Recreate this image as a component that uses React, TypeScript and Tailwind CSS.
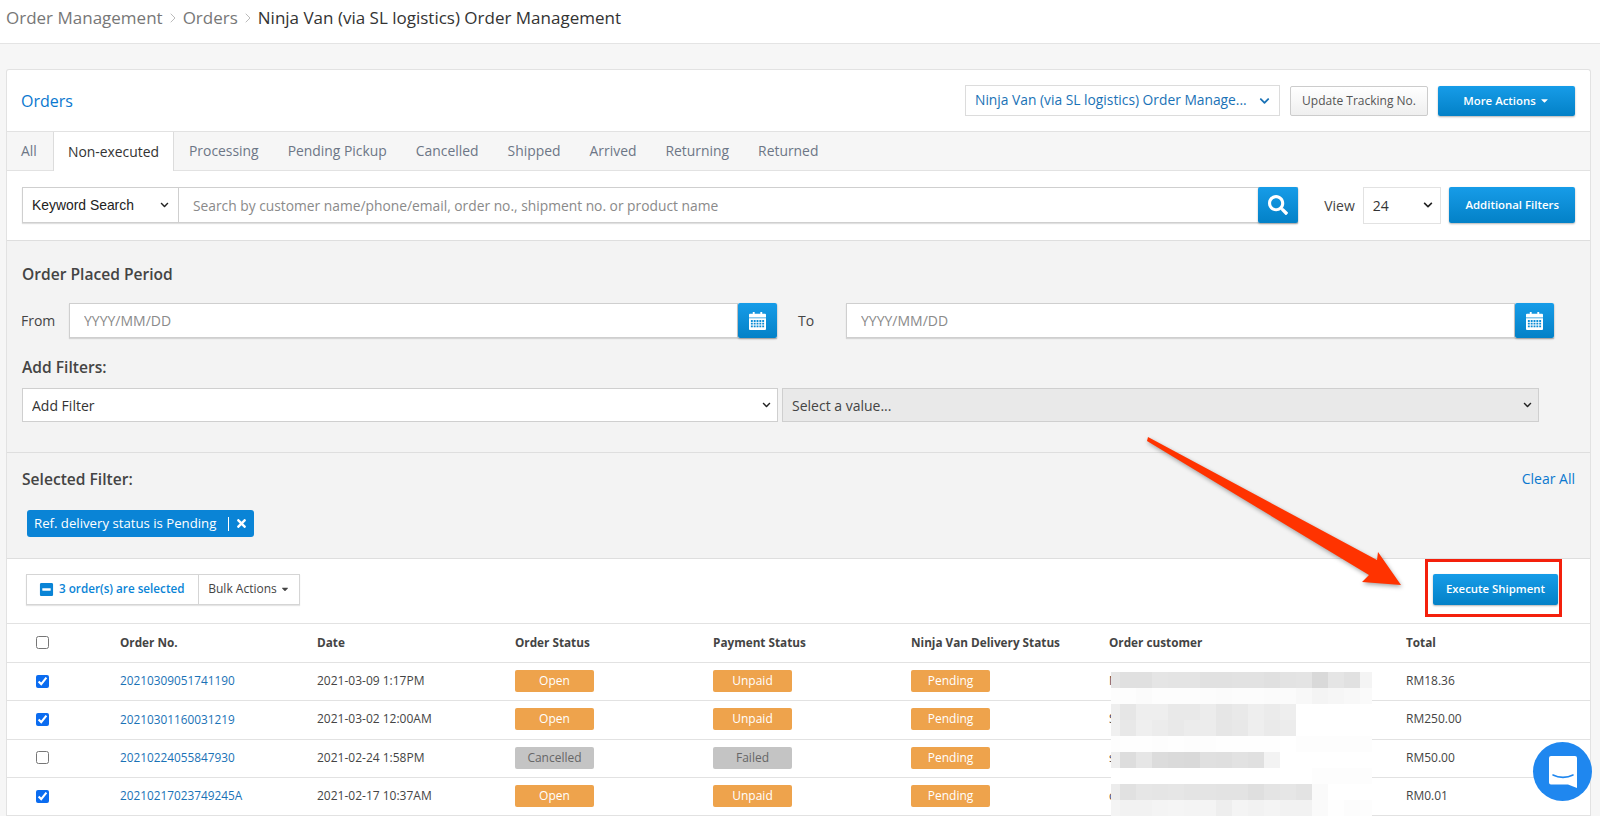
import { ChevronRight } from 'lucide-react';
import { FaCaretDown, FaChevronDown, FaMinusSquare, FaSearch, FaTimes } from 'react-icons/fa';

const blueButton =
  'flex items-center justify-center rounded-[2px] bg-linear-to-b from-[#169ce8] to-[#0381c7] text-white shadow-[0_1px_2px_rgba(0,0,0,0.3)]';

const tabs = ['Processing', 'Pending Pickup', 'Cancelled', 'Shipped', 'Arrived', 'Returning', 'Returned'];

const orders = [
  { no: '20210309051741190', date: '2021-03-09 1:17PM', status: 'Open', payment: 'Unpaid', initial: 'N', total: 'RM18.36', checked: true },
  { no: '20210301160031219', date: '2021-03-02 12:00AM', status: 'Open', payment: 'Unpaid', initial: 'S', total: 'RM250.00', checked: true },
  { no: '20210224055847930', date: '2021-02-24 1:58PM', status: 'Cancelled', payment: 'Failed', initial: 's', total: 'RM50.00', checked: false },
  { no: '20210217023749245A', date: '2021-02-17 10:37AM', status: 'Open', payment: 'Unpaid', initial: 'c', total: 'RM0.01', checked: true },
];

// mosaic over the customer names, one row per 16px band
const mosaic = [
  ['e5', 'e0', 'e0', 'e5', 'e4', 'e4', 'e1', 'e1', 'e2', 'e2', 'e0', 'e3', 'e4', 'd9', 'e5', 'e1', 'f4'],
  ['fd', 'fd', 'fb', 'fd', 'fd', 'fd', 'fc', 'fb', 'fc', 'fc', 'fb', 'fb', 'f8', 'f4', 'f6', 'f8', 'fa'],
  ['ee', 'e6', 'ee', 'ee', 'e9', 'e9', 'ec', 'e6', 'e9', 'ee', 'eb', 'ee', 'ff', 'ff', 'ff', 'ff', 'ff'],
  ['f0', 'e8', 'ef', 'ec', 'e9', 'ec', 'ec', 'e6', 'e8', 'ee', 'ea', 'ec', 'ff', 'ff', 'ff', 'ff', 'ff'],
  ['fd', 'fe', 'fe', 'fd', 'fe', 'fd', 'fd', 'fe', 'fe', 'fe', 'fe', 'ff', 'fd', 'fd', 'fd', 'fd', 'fd'],
  ['ee', 'dd', 'e6', 'dc', 'da', 'd9', 'e0', 'df', 'e2', 'e0', 'f3', 'ff', 'ff', 'ff', 'ff', 'ff', 'ff'],
  ['ff', 'ff', 'ff', 'ff', 'ff', 'ff', 'ff', 'ff', 'ff', 'ff', 'ff', 'ff', 'ff', 'fd', 'fd', 'fd', 'fd'],
  ['ec', 'e1', 'e6', 'e5', 'e6', 'e4', 'e4', 'e3', 'e3', 'df', 'e4', 'e6', 'e3', 'fa', 'ff', 'ff', 'ff'],
  ['f4', 'f2', 'f2', 'f4', 'f5', 'f4', 'f4', 'ee', 'f4', 'f2', 'f4', 'f2', 'f2', 'fa', 'fe', 'fc', 'fd'],
];

const NativeSelect = ({ label, className, chevron }: { label: string; className: string; chevron?: string }) => (
  <div className={`relative ${className}`}>
    <select className="h-full w-full appearance-none bg-transparent pl-[9px] outline-none">
      <option>{label}</option>
    </select>
    <FaChevronDown className={`pointer-events-none absolute top-1/2 -translate-y-1/2 ${chevron ?? 'right-[6px] text-[9px] text-[#222]'}`} />
  </div>
);

const CalendarIcon = () => (
  <svg width="17" height="18" viewBox="0 0 18 20" fill="white" preserveAspectRatio="none">
    <path fillRule="evenodd" d="M4 0h2v2h6V0h2v2h3a1 1 0 0 1 1 1v3H0V3a1 1 0 0 1 1-1h3V0z" />
    <path
      fillRule="evenodd"
      d="M0 7h18v12a1 1 0 0 1-1 1H1a1 1 0 0 1-1-1V7zm2 2v2h2V9H2zm3 0v2h2V9H5zm3 0v2h2V9H8zm3 0v2h2V9h-2zm3 0v2h2V9h-2zM2 12v2h2v-2H2zm3 0v2h2v-2H5zm3 0v2h2v-2H8zm3 0v2h2v-2h-2zm3 0v2h2v-2h-2zM2 15v2h2v-2H2zm3 0v2h2v-2H5zm3 0v2h2v-2H8zm3 0v2h2v-2h-2zm3 0v2h2v-2h-2z"
    />
  </svg>
);

const DateField = ({ label, className }: { label: string; className: string }) => (
  <div className={`flex items-center ${className}`}>
    <span className="-ml-px text-[14px] text-[#444]">{label}</span>
    <div className="ml-auto flex h-[35px] w-[calc(100%-47px)] shadow-[0_1px_1px_rgba(0,0,0,0.12)]">
      <input
        placeholder="YYYY/MM/DD"
        className="h-full min-w-0 flex-1 border border-[#cfcfcf] bg-white px-[14px] text-[14px] placeholder:text-[#8a8a8a]"
      />
      <button className={`${blueButton} h-full w-[39px]`}>
        <CalendarIcon />
      </button>
    </div>
  </div>
);

const Badge = ({ text }: { text: string }) => {
  const gray = text === 'Cancelled' || text === 'Failed';
  return (
    <span
      className={`flex h-[22px] w-[79px] items-center justify-center rounded-[2px] text-[12px] ${
        gray ? 'bg-[#c4c4c4] text-[#666]' : 'bg-[#eea34c] text-white'
      }`}
    >
      {text}
    </span>
  );
};

const gridCols = 'grid grid-cols-[113px_197px_198px_198px_198px_198px_297px_1fr] items-center';

export default function App() {
  return (
    <div className="relative h-[816px] w-[1600px] overflow-hidden bg-[#f6f6f6] font-['Open_Sans',sans-serif] text-[#333]">
      <header className="flex h-[44px] items-center border-b border-[#e4e4e4] bg-white pb-[7px] pl-[6px] text-[17px] text-[#777]">
        Order Management
        <ChevronRight className="mx-[2px] h-[16px] w-[16px] text-[#999]" strokeWidth={1} />
        Orders
        <ChevronRight className="mx-[2px] h-[16px] w-[16px] text-[#999]" strokeWidth={1} />
        <span className="text-[#333]">Ninja Van (via SL logistics) Order Management</span>
      </header>

      <main className="ml-[6px] mt-[25px] w-[1585px] rounded-t-[3px] border border-b-0 border-[#e2e2e2] bg-white">
        <div className="flex h-[61px] items-center pl-[14px] pr-[15px]">
          <h1 className="text-[16px] text-[#0a78cf]">Orders</h1>
          <NativeSelect
            label="Ninja Van (via SL logistics) Order Manage..."
            className="ml-auto h-[31px] w-[315px] border border-[#dcdcdc] text-[13.8px] text-[#1a72b6]"
            chevron="right-[9px] text-[11px] text-[#1a72b6]"
          />
          <button className="ml-[10px] h-[30px] w-[138px] rounded-[2px] border border-[#ccc] bg-linear-to-b from-white to-[#efefef] text-[12px] text-[#555]">
            Update Tracking No.
          </button>
          <button className={`${blueButton} ml-[10px] h-[30px] w-[137px] gap-[3px] text-[11.4px] font-semibold`}>
            More Actions
            <FaCaretDown className="text-[11px]" />
          </button>
        </div>

        <nav className="flex h-[40px] border-y border-[#e2e2e2] bg-[#f6f6f6] text-[13.9px] text-[#6d7686]">
          <span className="flex w-[46px] items-center pl-[14px] pt-[1px]">All</span>
          <span className="-mb-px flex w-[121px] items-center justify-center border-x border-[#dcdcdc] bg-white pt-[1px] text-[#333]">
            Non-executed
          </span>
          <div className="flex items-center gap-[29px] pl-[15px] pt-[1px]">
            {tabs.map(tab => (
              <span key={tab}>{tab}</span>
            ))}
          </div>
        </nav>

        <div className="flex h-[70px] items-center border-b border-[#dedede] px-[15px] pb-[1px]">
          <div className="flex h-[36px] w-[1281px] border border-[#cfcfcf] shadow-[0_1px_1px_rgba(0,0,0,0.12)]">
            <NativeSelect
              label="Keyword Search"
              className="h-full w-[156px] border-r border-[#cfcfcf] font-['Liberation_Sans',sans-serif] text-[13.9px] text-[#222]"
              chevron="right-[9px] text-[9px] text-[#222]"
            />
            <input
              placeholder="Search by customer name/phone/email, order no., shipment no. or product name"
              className="h-full min-w-0 flex-1 bg-white px-[14px] text-[13.8px] placeholder:text-[#8a8a8a]"
            />
            <button className={`${blueButton} -my-px -mr-px w-[40px]`}>
              <FaSearch className="text-[20px]" />
            </button>
          </div>
          <span className="ml-[26px] text-[14px] text-[#444]">View</span>
          <NativeSelect
            label="24"
            className="ml-[8px] h-[37px] w-[79px] border border-[#e2e2e2] text-[14px] text-[#333]"
            chevron="right-[7px] text-[10px] text-[#222]"
          />
          <button className={`${blueButton} ml-[8px] h-[36px] w-[126px] text-[11.4px] font-semibold`}>Additional Filters</button>
        </div>

        <section className="h-[212px] border-b border-[#dedede] bg-[#f3f3f3] px-[15px] pt-[22px]">
          <h2 className="text-[15.6px] leading-[22px] font-semibold text-[#444]">Order Placed Period</h2>
          <div className="mt-[18px] flex items-center">
            <DateField label="From" className="w-[755px]" />
            <DateField label="To" className="ml-[22px] w-[755px]" />
          </div>
          <h2 className="mt-[18px] text-[15.6px] leading-[22px] font-semibold text-[#444]">Add Filters:</h2>
          <div className="mt-[10px] flex gap-[4px] text-[14px]">
            <NativeSelect label="Add Filter" className="h-[34px] w-[756px] border border-[#cfcfcf] bg-white text-[#333]" />
            <NativeSelect label="Select a value..." className="h-[34px] w-[757px] border border-[#cfcfcf] bg-[#e9e9e9] text-[#444]" />
          </div>
        </section>

        <section className="relative h-[106px] border-b border-[#dedede] bg-[#f3f3f3] px-[15px] pt-[15px]">
          <h2 className="text-[15.6px] leading-[22px] font-semibold text-[#444]">Selected Filter:</h2>
          <a className="absolute right-[15px] top-[15px] text-[14px] text-[#0a78cf]">Clear All</a>
          <div className="ml-[5px] mt-[20px] flex h-[27px] w-[227px] items-center whitespace-nowrap rounded-[3px] bg-[#0a84d6] pl-[7px] text-[13.2px] text-white">
            Ref. delivery status is Pending
            <span className="ml-[12px] h-[14px] w-px bg-white" />
            <FaTimes className="ml-[6px] text-[13px]" />
          </div>
        </section>

        <div className="flex h-[64px] items-center justify-between pb-[4px] pl-[19px] pr-[32px]">
          <div className="flex h-[31px] w-[274px] border border-[#d5d5d5] text-[12px] shadow-[0_1px_1px_rgba(0,0,0,0.1)]">
            <span className="flex w-[172px] items-center gap-[5px] border-r border-[#d5d5d5] pl-[12px] text-[11.7px] font-semibold text-[#0a84d6]">
              <FaMinusSquare className="text-[15px]" />3 order(s) are selected
            </span>
            <span className="flex flex-1 items-center justify-center gap-[3px] text-[#444]">
              Bulk Actions
              <FaCaretDown className="text-[10px]" />
            </span>
          </div>
          <button className={`${blueButton} h-[31px] w-[125px] text-[11.4px] font-semibold`}>Execute Shipment</button>
        </div>

        <div className={`${gridCols} h-[40px] border-y border-[#e2e2e2] text-[11.75px] font-bold text-[#444]`}>
          <span className="flex pb-[1px] pl-[29px]">
            <input type="checkbox" className="h-[13px] w-[13px]" />
          </span>
          <span>Order No.</span>
          <span>Date</span>
          <span>Order Status</span>
          <span>Payment Status</span>
          <span>Ninja Van Delivery Status</span>
          <span>Order customer</span>
          <span>Total</span>
        </div>
        {orders.map(order => (
          <div key={order.no} className={`${gridCols} h-[38.33px] border-b border-[#e2e2e2] pb-[1px] text-[12px] text-[#444]`}>
            <span className="flex pl-[29px]">
              <input type="checkbox" defaultChecked={order.checked} className="h-[13px] w-[13px] accent-[#0b6cf0]" />
            </span>
            <a className="text-[11.8px] text-[#1a72b6]">{order.no}</a>
            <span>{order.date}</span>
            <Badge text={order.status} />
            <Badge text={order.payment} />
            <Badge text="Pending" />
            <span>{order.initial}</span>
            <span>{order.total}</span>
          </div>
        ))}
      </main>

      {/* mosaic hiding customer names */}
      <div className="absolute left-[1111px] top-[672px] w-[261px]">
        {mosaic.map((row, r) => (
          <div key={r} className="flex h-[16px]">
            {row.map((shade, c) => (
              <div
                key={c}
                className={c === 0 ? 'w-[9px]' : c === 16 ? 'w-[12px]' : 'w-[16px]'}
                style={{ backgroundColor: `#${shade}${shade}${shade}` }}
              />
            ))}
          </div>
        ))}
      </div>

      {/* annotation */}
      <div className="absolute left-[1425px] top-[559px] h-[58px] w-[137px] border-[3px] border-[#f4200c]" />
      <svg className="absolute left-[1140px] top-[430px] drop-shadow-[1px_2px_2px_rgba(0,0,0,0.35)]" width="270" height="165" viewBox="0 0 270 165">
        <polygon points="8,7 237,130 238,122 261,155 222,152 229,145 7,11" fill="#ff3300" />
      </svg>

      {/* chat launcher */}
      <button className="absolute left-[1533px] top-[742px] flex h-[59px] w-[59px] items-center justify-center rounded-full bg-[#1f87ef]">
        <svg width="28" height="32" viewBox="0 0 28 32">
          <path d="M2 0h24a2 2 0 0 1 2 2v30l-9-3.5H2a2 2 0 0 1-2-2V2a2 2 0 0 1 2-2z" fill="white" />
          <path d="M4 19c6 3.2 14 3.2 20 0" fill="none" stroke="#1f87ef" strokeWidth="1.6" strokeLinecap="round" />
        </svg>
      </button>
    </div>
  );
}
